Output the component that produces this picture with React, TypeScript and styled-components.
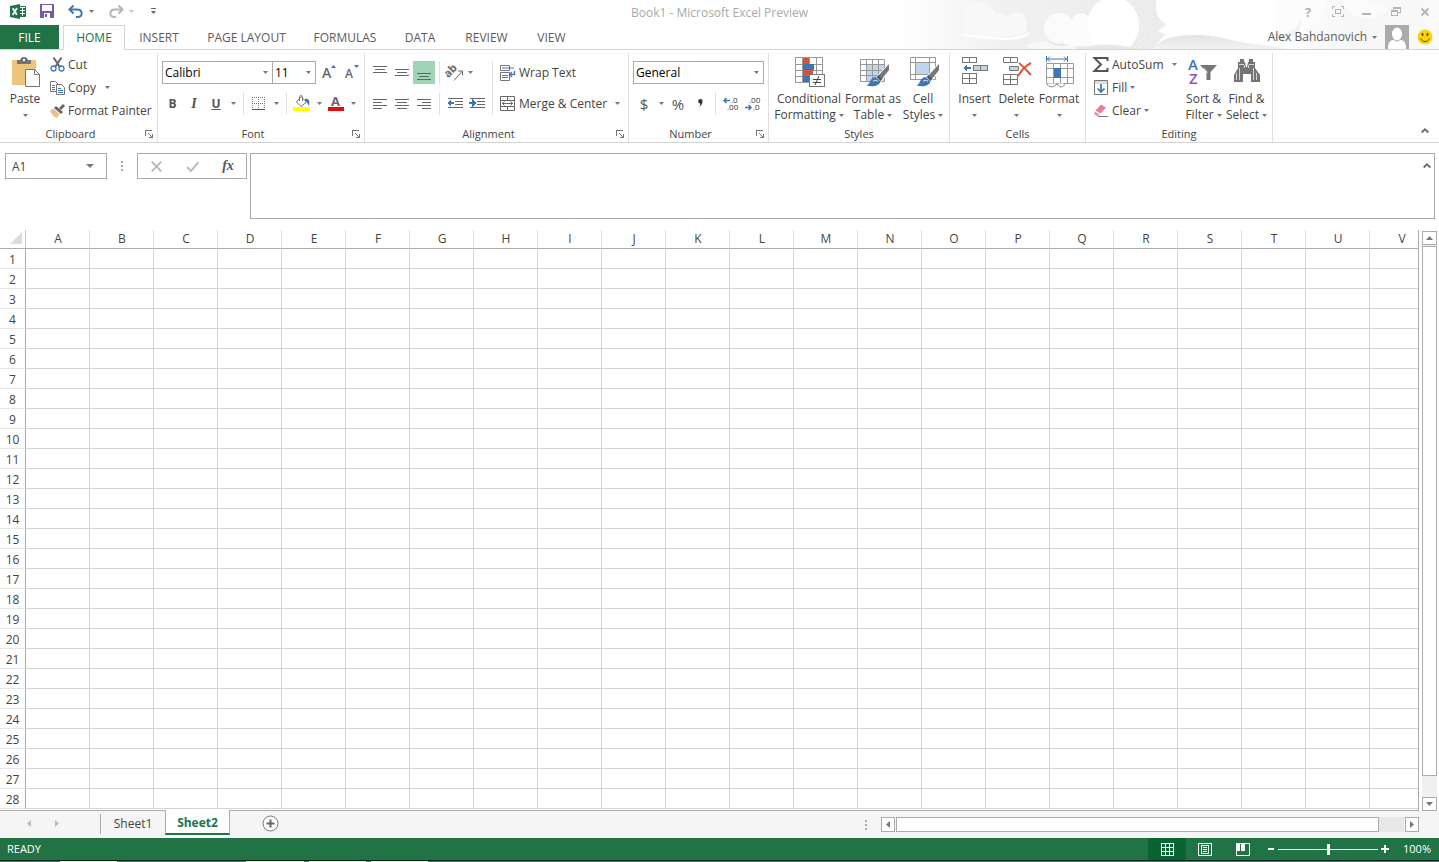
import React from 'react';
import styled, { createGlobalStyle, css } from 'styled-components';

const GREEN = '#217346';
const GREY = '#777777';
const BLUE = '#3e76b5';
const LINE = '#d4d4d4';
const EDGE = '#ababab';

const GlobalStyle = createGlobalStyle`
  *, *::before, *::after { box-sizing: border-box; }
  body { margin: 0; background: #fff; }
  body, button, input, select, textarea {
    font-family: 'Open Sans', 'Noto Sans', sans-serif;
    font-size: 12px;
    line-height: 16px;
    color: #444;
  }
  button {
    padding: 0;
    border: 0;
    background: none;
    white-space: nowrap;
  }
  svg { display: block; flex: none; overflow: visible; }
`;

/* ---------- shared parts ---------- */

const Page = styled.div`
  display: flex;
  flex-direction: column;
  min-height: 100vh;
  overflow: hidden;
`;

const Header = styled.header`
  position: relative;
  border-bottom: 1px solid ${LINE};
`;

const Backdrop = styled.div`
  position: absolute;
  top: 0;
  right: 0;
  height: 49px;
  overflow: hidden;
`;

const TitleBar = styled.div`
  position: relative;
  display: grid;
  grid-template-columns: 1fr auto 1fr;
  align-items: start;
  height: 25px;
`;

const QuickAccess = styled.div`
  display: flex;
  align-items: center;
  height: 22px;
  padding-left: 7px;
`;

const SplitButton = styled.div`
  display: flex;
  margin-right: 10px;
`;

const IconButton = styled.button<{ $w?: number; $on?: boolean }>`
  display: flex;
  align-items: center;
  justify-content: center;
  flex: none;
  width: ${({ $w = 22 }) => $w}px;
  height: 23px;
  color: #555;
  background: ${({ $on }) => ($on ? '#9fd5b7' : 'none')};
`;

const Title = styled.h1`
  margin: 0;
  font-size: 12px;
  font-weight: 400;
  line-height: 25px;
  color: #a9a9a9;
`;

const WindowButtons = styled.div`
  display: flex;
  justify-content: flex-end;
  align-items: center;
  height: 23px;
`;

const TabRow = styled.div`
  position: relative;
  display: flex;
  justify-content: space-between;
  height: 24px;
`;

const Tabs = styled.nav`
  display: flex;
`;

const Tab = styled.button<{ $w: number; $kind?: 'file' | 'active' }>`
  width: ${({ $w }) => $w}px;
  height: 24px;
  padding-top: 1px;
  color: #5c5c5c;
  ${({ $kind }) =>
    $kind === 'file' &&
    css`
      margin-right: 4px;
      background: ${GREEN};
      color: #fff;
    `}
  ${({ $kind }) =>
    $kind === 'active' &&
    css`
      height: 25px;
      padding-top: 0;
      border: 1px solid ${LINE};
      border-bottom: 0;
      background: #fff;
      color: ${GREEN};
    `}
`;

const Account = styled.div`
  display: flex;
  align-items: center;
  gap: 8px;
  padding-right: 6px;
`;

const AccountName = styled.button`
  display: flex;
  align-items: center;
  gap: 5px;
  color: #5c5c5c;
`;

/* ---------- ribbon ---------- */

const Ribbon = styled.div`
  display: flex;
  height: 93px;
  border-bottom: 1px solid ${LINE};
`;

const GroupBox = styled.section<{ $w: number }>`
  display: flex;
  flex-direction: column;
  flex: none;
  width: ${({ $w }) => $w}px;
  height: 89px;
  margin-top: 3px;
  border-right: 1px solid #e1e1e1;
`;

const GroupBody = styled.div<{ $pad?: number }>`
  display: flex;
  height: 73px;
  padding-left: ${({ $pad = 4 }) => $pad}px;
`;

const GroupFooter = styled.div`
  display: flex;
  align-items: center;
  height: 16px;
`;

const GroupName = styled.h2`
  flex: 1;
  margin: 0;
  font-size: 11px;
  font-weight: 400;
  text-align: center;
`;

const TwoRows = styled.div`
  display: flex;
  flex-direction: column;
  padding-top: 4px;
`;

const ToolRow = styled.div`
  display: flex;
  align-items: center;
  height: 31px;
`;

const Divider = styled.span<{ $tall?: boolean }>`
  flex: none;
  width: 1px;
  height: ${({ $tall }) => ($tall ? 54 : 23)}px;
  margin: ${({ $tall }) => ($tall ? '8px 4px 0' : '0 4px')};
  background: #e1e1e1;
`;

const Stack = styled.div<{ $w?: number }>`
  display: flex;
  flex-direction: column;
  width: ${({ $w }) => ($w ? `${$w}px` : 'auto')};
`;

const SmallButton = styled.button<{ $gap?: number }>`
  display: flex;
  align-items: center;
  gap: 3px;
  height: 23px;
  padding: 0 3px;

  & > span { margin-right: ${({ $gap = 0 }) => $gap}px; }
`;

const BigButton = styled.button<{ $w: number }>`
  display: flex;
  flex-direction: column;
  align-items: center;
  flex: none;
  width: ${({ $w }) => $w}px;
  padding-top: 3px;
`;

const BigArt = styled.span`
  height: 35px;
`;

const BigLine = styled.span`
  display: flex;
  align-items: center;
  gap: 3px;
  height: 16px;
`;

const SelectWrap = styled.div<{ $w: number; $joined?: boolean }>`
  position: relative;
  width: ${({ $w }) => $w}px;
  margin-left: ${({ $joined }) => ($joined ? -1 : 0)}px;

  & > svg {
    position: absolute;
    right: 5px;
    top: 10px;
    pointer-events: none;
  }
`;

const Select = styled.select`
  display: block;
  appearance: none;
  width: 100%;
  height: 23px;
  padding: 0 2px;
  border: 1px solid ${EDGE};
  border-radius: 0;
  background: #fff;
  color: #000;
`;

const Letter = styled.span<{ $b?: boolean; $i?: boolean; $u?: boolean; $size?: number }>`
  font-size: ${({ $size = 12 }) => $size}px;
  font-weight: ${({ $b }) => ($b ? 700 : 400)};
  font-style: ${({ $i }) => ($i ? 'italic' : 'normal')};
  font-family: ${({ $i }) => ($i ? "'Liberation Serif', serif" : 'inherit')};
  text-decoration: ${({ $u }) => ($u ? 'underline' : 'none')};
`;

const Collapse = styled.div`
  display: flex;
  flex: 1;
  align-items: flex-end;
  justify-content: flex-end;
  padding: 0 3px;
`;

/* ---------- formula bar ---------- */

const FormulaBar = styled.div`
  display: flex;
  align-items: flex-start;
  padding: 10px 4px 11px 5px;
`;

const NameBox = styled.div`
  display: flex;
  align-items: center;
  width: 102px;
  height: 26px;
  border: 1px solid ${EDGE};
`;

const NameInput = styled.input`
  width: 72px;
  padding: 1px 6px 0;
  border: 0;
  background: none;
`;

const Grip = styled.span<{ $w: number }>`
  display: flex;
  align-items: center;
  justify-content: center;
  width: ${({ $w }) => $w}px;
  height: 26px;
`;

const FormulaTools = styled.div`
  display: flex;
  align-items: center;
  width: 110px;
  height: 26px;
  margin-right: 3px;
  border: 1px solid ${EDGE};
`;

const FormulaField = styled.div`
  display: flex;
  flex: 1;
  height: 66px;
  border: 1px solid ${EDGE};
`;

const FormulaInput = styled.textarea`
  flex: 1;
  border: 0;
  outline: 0;
  resize: none;
`;

/* ---------- grid ---------- */

const Workspace = styled.main`
  display: flex;
  flex: 1;
`;

const GridPane = styled.div`
  flex: 1;
  min-width: 0;
  overflow: hidden;
  border-right: 1px solid ${EDGE};
  border-bottom: 1px solid ${EDGE};
  padding-bottom: 1px;
`;

const Grid = styled.table`
  table-layout: fixed;
  width: 1434px;
  border-collapse: separate;
  border-spacing: 0;
`;

const Corner = styled.td`
  width: 26px;
  height: 19px;
  padding: 0 3px 2px 10px;
  border-right: 1px solid #c6c6c6;
  border-bottom: 1px solid ${EDGE};
`;

const ColHead = styled.th`
  width: 64px;
  height: 19px;
  padding: 0 0 0 1px;
  border-right: 1px solid #e0e0e0;
  border-bottom: 1px solid ${EDGE};
  font-weight: 400;
`;

const RowHead = styled.th`
  height: 20px;
  padding: 2px 0 0;
  border-right: 1px solid ${EDGE};
  border-bottom: 1px solid #e6e6e6;
  font-weight: 400;
`;

const Cell = styled.td`
  height: 20px;
  padding: 0;
  border-right: 1px solid ${LINE};
  border-bottom: 1px solid ${LINE};
`;

const VScroll = styled.div`
  display: flex;
  flex-direction: column;
  width: 20px;
  padding: 1px 2px 0 3px;
  background: #fff;
`;

const ScrollButton = styled.button<{ $side?: boolean }>`
  display: flex;
  align-items: center;
  justify-content: center;
  flex: none;
  width: ${({ $side }) => ($side ? 14 : 15)}px;
  height: ${({ $side }) => ($side ? 15 : 14)}px;
  border: 1px solid ${EDGE};
  background: #fff;
`;

const VTrack = styled.div`
  flex: 1;
  padding: 1px 0 21px;
  background: #f0f0f0;
`;

const Thumb = styled.div`
  height: 100%;
  border: 1px solid ${EDGE};
  background: #fff;
`;

/* ---------- sheet tabs ---------- */

const SheetBar = styled.div`
  display: flex;
  height: 27px;
  background: #f5f5f5;
`;

const SheetNav = styled.div`
  display: flex;
  align-items: center;
  width: 100px;
  height: 25px;
  padding-left: 15px;
`;

const SheetRule = styled.span`
  width: 1px;
  height: 20px;
  margin-top: 3px;
  background: ${EDGE};
`;

const SheetTab = styled.button<{ $active?: boolean }>`
  width: 64px;
  height: 25px;
  margin-top: -1px;
  padding-top: 2px;
  ${({ $active }) =>
    $active &&
    css`
      position: relative;
      width: 65px;
      padding-top: 3px;
      border: 1px solid ${EDGE};
      border-top: 0;
      border-bottom: 2px solid ${GREEN};
      background: #fff;
      color: ${GREEN};
      font-weight: 700;
    `}
`;

const NewSheet = styled.button`
  display: flex;
  align-items: center;
  height: 25px;
  margin-left: 32px;
`;

const HScroll = styled.div`
  display: flex;
  flex: 1;
  justify-content: flex-end;
  align-items: center;
  height: 27px;
  padding-right: 20px;
`;

const HTrack = styled.div`
  flex: 0 1 508px;
  height: 15px;
  margin: 0 1px;
  padding-right: 25px;
  background: #e8e8e8;
`;

/* ---------- status bar ---------- */

const StatusBar = styled.footer`
  display: flex;
  align-items: center;
  justify-content: space-between;
  height: 22px;
  padding: 0 5px 0 7px;
  background: ${GREEN};
  color: #fff;
  font-size: 11px;
`;

const StatusTools = styled.div`
  display: flex;
  align-items: center;
`;

const Views = styled.div`
  display: flex;
  margin-right: 2px;
`;

const ViewButton = styled.button<{ $on?: boolean }>`
  display: flex;
  align-items: center;
  justify-content: center;
  width: 38px;
  height: 22px;
  background: ${({ $on }) => ($on ? '#0a6332' : 'none')};
`;

const ZoomButton = styled.button`
  display: flex;
  align-items: center;
  justify-content: center;
  width: 14px;
  height: 22px;
`;

const ZoomRange = styled.input`
  appearance: none;
  width: 100px;
  height: 11px;
  margin: 0;
  background: linear-gradient(#fff, #fff) center / 100% 1px no-repeat;

  &::-webkit-slider-thumb {
    appearance: none;
    width: 3px;
    height: 11px;
    background: #fff;
  }
`;

const ZoomValue = styled.span`
  width: 34px;
  margin-left: 8px;
  text-align: center;
`;

const BottomEdge = styled.div`
  height: 2px;
  border-top: 1px solid #0c1f16;
  background: linear-gradient(
    90deg,
    #3d7a72 60px,
    #e8ecd8 60px 117px,
    #3d7a72 117px 246px,
    #e8ecd8 246px 304px,
    #3d7a72 304px 309px,
    #e8ecd8 309px 366px,
    #3d7a72 366px 371px,
    #e8ecd8 371px 428px,
    #3d7a72 428px
  );
`;

/* ---------- icons ---------- */

type SvgProps = { w: number; h: number; crisp?: boolean; children: React.ReactNode };

const Svg = ({ w, h, crisp, children }: SvgProps) => (
  <svg
    width={w}
    height={h}
    viewBox={`0 0 ${w} ${h}`}
    fill="none"
    shapeRendering={crisp ? 'crispEdges' : 'auto'}
    aria-hidden="true"
  >
    {children}
  </svg>
);

const Arrow = ({ color = GREY }: { color?: string }) => (
  <Svg w={5} h={3}>
    <path d="M0 0h5L2.500 3z" fill={color} />
  </Svg>
);

const CloudArt = () => (
  <svg width="539" height="49" viewBox="0 0 539 49" aria-hidden="true">
    <defs>
      <linearGradient id="sky" x1="0" x2="1">
        <stop offset="0" stopColor="#fff" />
        <stop offset="0.12" stopColor="#f6f6f6" />
        <stop offset="0.2" stopColor="#f0f0f0" />
        <stop offset="0.5" stopColor="#ededed" />
        <stop offset="0.75" stopColor="#f1f1f1" />
        <stop offset="1" stopColor="#f6f6f6" />
      </linearGradient>
      <linearGradient id="hill" x1="0" y1="0" x2="0" y2="1">
        <stop offset="0" stopColor="#e4e4e4" />
        <stop offset="1" stopColor="#f3f3f3" />
      </linearGradient>
      <linearGradient id="mist" x1="0" x2="1">
        <stop offset="0" stopColor="#fff" />
        <stop offset="0.5" stopColor="#f6f6f6" />
        <stop offset="1" stopColor="#fafafa" />
      </linearGradient>
      <pattern id="grain" width="7" height="7" patternUnits="userSpaceOnUse">
        <path d="M1 1h1v1H1zM4 2h1v1H4zM2 4h1v1H2zM5 5h1v1H5z" fill="#e2e2e2" />
      </pattern>
    </defs>
    <rect width="539" height="49" fill="url(#sky)" />
    <path d="M170 0h50v16h-50zM228 0h50v49h-50z" fill="url(#grain)" />
    <circle cx="79" cy="18" r="16" fill="#f8f8f8" />
    <circle cx="99" cy="22" r="9" fill="#f8f8f8" />
    <circle cx="116" cy="23" r="11" fill="#f8f8f8" />
    <path d="M64 22h62v10c-10 6-30 5-62 2z" fill="#f8f8f8" />
    <path d="M60 35c20-3 46 9 70-3-4 12-40 8-70 3z" fill="#fff" />
    <path d="M126 45c10-3 14-5 22-2 8 3 16 1 24 1l4 5h-46z" fill="#f8f8f8" />
    <circle cx="159" cy="28" r="15" fill="#fbfbfb" />
    <circle cx="181" cy="22" r="9" fill="#fcfcfc" />
    <path d="M164 24h40v22h-40z" fill="#fcfcfc" />
    <ellipse cx="213" cy="25" rx="26" ry="28" fill="#fff" />
    <path d="M148 42c6 3 14 3 22 2-6 3-16 2-22-2z" fill="#dedede" />
    <path d="M176 49c20-6 42-6 60 0z" fill="#e8e8e8" />
    <path d="M256 0h120v49H254c4-6 6-10 12-14l-8-4 8-6-8-8c-2-6-2-12-2-17z" fill="#fff" />
    <path d="M376 0h163v49H376z" fill="url(#mist)" />
    <path d="M376 0h50c0 16-10 28-30 33-6 2-14 2-20 0z" fill="#fcfcfc" />
    <path d="M256 46c10-14 50-13 76-6 18 5 38 5 56 9H256z" fill="url(#hill)" />
    <path d="M364 33c20 4 36-2 36-16 4 10-4 22-18 24z" fill="#f3f3f3" />
    <path d="M442 2c14-6 40-2 46 8-10 10-36 14-46-8z" fill="#fbfbfb" />
  </svg>
);

const ExcelLogo = () => (
  <Svg w={16} h={15}>
    <path d="M9 2.500h6.500v10H9" fill="#fff" stroke={GREEN} />
    <path d="M10 4h2v2h-2zM13 4h2v2h-2zM10 7h2v2h-2zM13 7h2v2h-2zM10 10h2v2h-2zM13 10h2v2h-2z" fill={GREEN} />
    <path d="M0 2l10-2v15L0 13z" fill={GREEN} />
    <path d="M2.700 4.300l4.200 6.400M7 4.100l-4.400 6.800" stroke="#fff" strokeWidth="1.800" />
  </Svg>
);

const SaveIcon = () => (
  <Svg w={14} h={14} crisp>
    <path d="M0 0h14v14H0z" fill="#7b57a4" />
    <path d="M2 1h10v6H2zM4 9h6v5H4z" fill="#fff" />
    <path d="M5 10h2v3H5z" fill="#7b57a4" />
  </Svg>
);

const UndoIcon = ({ color, flip }: { color: string; flip?: boolean }) => (
  <Svg w={15} h={13}>
    <g transform={flip ? 'matrix(-1 0 0 1 15 0)' : undefined} stroke={color} strokeWidth="2">
      <path d="M5.500 0.500L1.500 4.500l4 4" />
      <path d="M2 4.500h7c6 0 6 7 1 7.500H8" />
    </g>
  </Svg>
);

const PasteIcon = () => (
  <Svg w={29} h={32}>
    <path d="M1 4h24v25H1z" fill="#ecc47c" />
    <path d="M6 4h3c1-4 7-4 8 0h3v4H6z" fill="#737373" />
    <path d="M12 3h2v2h-2z" fill="#fff" />
    <path d="M14.500 13.500h9l5 5v12h-14z" fill="#fff" stroke="#777" />
    <path d="M23.500 13.500v5h5" stroke="#777" />
  </Svg>
);

const CutIcon = () => (
  <Svg w={15} h={15}>
    <path d="M3.500 0.500L9.500 9.500M11.500 0.500L5.500 9.500" stroke="#666" strokeWidth="2" />
    <circle cx="3.500" cy="11.500" r="2.500" stroke={BLUE} strokeWidth="1.300" />
    <circle cx="11.500" cy="11.500" r="2.500" stroke={BLUE} strokeWidth="1.300" />
  </Svg>
);

const CopyIcon = () => (
  <Svg w={15} h={14}>
    <path d="M0.500 0.500h5l3 3v7h-8z" fill="#fff" stroke="#777" />
    <path d="M2 4.500h3M2 6.500h3M2 8.500h3" stroke={BLUE} />
    <path d="M6.500 3.500h5l3 3v7h-8z" fill="#fff" stroke="#777" />
    <path d="M8 7.500h3M8 9.500h5M8 11.500h5" stroke={BLUE} />
  </Svg>
);

const PainterIcon = () => (
  <Svg w={15} h={14}>
    <path d="M13 0l2 2-4 4-2-2z" fill="#666" />
    <path d="M6 2l7 6-2 2-7-6z" fill="#666" />
    <path d="M3.500 4.500L9.500 10 7 14C4 13 1 10 0 7z" fill="#ecc08a" />
  </Svg>
);

const GrowIcon = ({ size, down }: { size: number; down?: boolean }) => (
  <Svg w={16} h={17}>
    <text x="2" y="14" fontSize={size} fontWeight="600" fill="#666">A</text>
    <path d={down ? 'M11 1h5l-2.500 3z' : 'M11 4h5l-2.500-3z'} fill={BLUE} />
  </Svg>
);

const BordersIcon = () => (
  <Svg w={14} h={14} crisp>
    <path d="M0 0.500h13M0 6.500h13M0.500 0v13M6.500 0v13M12.500 0v13" stroke="#777" strokeDasharray="1 1" />
    <path d="M0 12.500h13" stroke="#555" />
  </Svg>
);

const FillColorIcon = () => (
  <Svg w={18} h={17}>
    <path d="M0 12h17v4H0z" fill="#ffff00" />
    <path d="M8 1.500L13.500 7 8 11.500 3.500 7z" fill="#fff" stroke="#777" />
    <path d="M6.500 6V2c0-2 3-2 3 0v4" stroke="#777" />
    <path d="M12 4c4-1 5 2 4 7-1-2-2-4-4-5z" fill={BLUE} />
  </Svg>
);

const FontColorIcon = () => (
  <Svg w={16} h={17}>
    <text x="3" y="11" fontSize="13" fontWeight="700" fill="#666">A</text>
    <path d="M0 12h16v4H0z" fill="#e80c0c" />
  </Svg>
);

const LinesIcon = ({ rows, top }: { rows: [number, number][]; top: number }) => (
  <Svg w={14} h={18} crisp>
    {rows.map(([x, w], i) => (
      <path key={i} d={`M${x} ${top + i * 3 + 0.5}h${w}`} stroke="#666" />
    ))}
  </Svg>
);

const three: [number, number][] = [[0, 14], [2, 10], [0, 14]];

const OrientIcon = () => (
  <Svg w={17} h={16}>
    <g transform="rotate(-45 5 9)">
      <text x="0" y="10" fontSize="11" fontWeight="700" fill="#666">ab</text>
    </g>
    <path d="M8 15.500L16 6.500M12 6h4.500v4.500" stroke="#666" />
  </Svg>
);

const IndentIcon = ({ out }: { out?: boolean }) => (
  <Svg w={16} h={12} crisp>
    <path d="M1 0.500h15M8 3.500h8M8 6.500h8M1 9.500h15" stroke="#666" />
    <path
      d={out ? 'M0 5l4-4v3h3v2H4v3z' : 'M7 5L3 1v3H0v2h3v3z'}
      fill={BLUE}
    />
  </Svg>
);

const WrapIcon = () => (
  <Svg w={16} h={16}>
    <path d="M0.500 0.500h9v5h-9zM0.500 7.500h9v8h-9z" stroke="#777" />
    <path d="M2 3h12M2 10.500h6M2 12.500h6" stroke={BLUE} />
    <path d="M14.500 6v3.500H10M12 7l-2.500 2.500L12 12" stroke={BLUE} strokeWidth="1.300" />
  </Svg>
);

const MergeIcon = () => (
  <Svg w={16} h={15}>
    <path d="M0.500 0.500h14v14h-14zM0.500 4.500h14M0.500 10.500h14M7.500 0.500v4M7.500 10.500v4" stroke="#666" />
    <path d="M2 7.500h11M4.500 5.500l-2 2 2 2M10.500 5.500l2 2-2 2" stroke={BLUE} />
  </Svg>
);

const DecimalIcon = ({ more }: { more?: boolean }) => (
  <Svg w={16} h={15}>
    <text x={more ? 8 : 4} y="7" fontSize="8" fill="#333">{more ? '.0' : '.00'}</text>
    <text x={more ? 4 : 8} y="14" fontSize="8" fill="#333">{more ? '.00' : '.0'}</text>
    {more ? (
      <path d="M1 4.500h6M3.500 2L1 4.500 3.500 7" stroke={BLUE} strokeWidth="1.500" />
    ) : (
      <path d="M0 11.500h6M3.500 9L6 11.500 3.500 14" stroke={BLUE} strokeWidth="1.500" />
    )}
  </Svg>
);

const CondIcon = () => (
  <Svg w={29} h={32} crisp>
    <path d="M0.500 1.500h27v25h-27zM0.500 8.500h27M0.500 14.500h27M0.500 20.500h27M7.500 1v25M14.500 1v25M21.500 1v25" stroke="#999" />
    <path d="M8 2h6v6H8zM8 14h10v6H8z" fill="#d35439" />
    <path d="M8 8h11v6H8zM8 20h6v6H8z" fill={BLUE} />
    <path d="M14.500 18.500h15v12h-15z" fill="#fff" stroke="#777" />
    <path d="M18 23h8v1h-8zM18 26h8v1h-8z" fill="#444" />
    <path d="M24 20l-4 9" stroke="#444" shapeRendering="auto" />
  </Svg>
);

const Brush = () => (
  <>
    <path d="M30 7L17 21l5 5 9-11V8z" fill="#fff" />
    <path d="M30 8v6l-7 9-3.500-3.500z" fill="#777" />
    <path d="M19.500 19l4 4-2 2-4-4z" fill="#555" />
    <path d="M16.500 21l5 4.500c-1 4-7 6-14 4 4-1 3-8 9-8.500z" fill={BLUE} />
    <path d="M14 25.500c2-2 4-1 5 0" stroke="#fff" />
  </>
);

const TableIcon = () => (
  <Svg w={29} h={32}>
    <path d="M7 9h18v16H7z" fill="#bfd5e9" />
    <path d="M1.500 3.500h24v22h-24zM1.500 8.500h24M1.500 14.500h24M1.500 19.500h24M7.500 3.500v22M13.500 3.500v22M19.500 3.500v22" stroke="#999" />
    <Brush />
  </Svg>
);

const CellStyleIcon = () => (
  <Svg w={29} h={32}>
    <path d="M1.500 1.500h25v22h-25zM1.500 6.500h25M1.500 18.500h25M6.500 1.500v22M20.500 1.500v22" stroke="#999" />
    <path d="M7 7h13v11H7z" fill="#bfd5e9" />
    <Brush />
  </Svg>
);

const InsertIcon = () => (
  <Svg w={27} h={32} crisp>
    <path d="M1.500 1.500h14v5h-14zM8.500 1.500v5M1.500 17.500h14v10h-14zM1.500 22.500h14M8.500 17.500v10" stroke="#777" />
    <path d="M12.500 9.500h14v5h-14z" fill="#bfd5e9" stroke="#777" />
    <path d="M19.500 9.500v5" stroke="#777" />
    <path d="M2 12l4-3v2h4v2H6v2z" fill={BLUE} />
  </Svg>
);

const DeleteIcon = () => (
  <Svg w={30} h={32}>
    <path d="M1.500 1.500h14v5h-14zM8.500 1.500v5M1.500 18.500h14v10h-14zM1.500 23.500h14M8.500 18.500v10" stroke="#777" />
    <path d="M7.500 10.500h9v4h-9z" fill="#bfd5e9" stroke="#777" />
    <path d="M17 7c4 3 8 8 12 12M29 7c-6 3-10 8-13 13" stroke="#dc5a3c" strokeWidth="2" />
  </Svg>
);

const FormatIcon = () => (
  <Svg w={29} h={32}>
    <path d="M1.500 0v6M22.500 0v6M2 3h20M5 0.500L2.500 3 5 5.500M19 0.500L21.500 3 19 5.500" stroke={BLUE} />
    <path d="M1.500 7.500h27v20h-27zM1.500 12.500h27M1.500 21.500h27M8.500 7.500v20M15.500 7.500v20M22.500 7.500v20" stroke="#999" />
    <path d="M9 12h7v10H9z" fill={BLUE} />
    <path d="M2 27.500c1 5 8 4 10 0 2 5 7 4 8 0" fill="#fff" stroke="#888" />
  </Svg>
);

const SumIcon = () => (
  <Svg w={16} h={15}>
    <path d="M14.500 4V1H1.500L8 7.500 1.500 14h13v-3" stroke="#555" strokeWidth="2" />
  </Svg>
);

const FillIcon = () => (
  <Svg w={16} h={15}>
    <path d="M1.500 0.500h13v14H1.500z" fill="#fff" stroke="#777" />
    <path d="M2 1h12v3H2z" fill="#ddd" />
    <path d="M8 4v8M4.500 8.500L8 12l3.500-3.500" stroke={BLUE} strokeWidth="1.700" />
  </Svg>
);

const ClearIcon = () => (
  <Svg w={16} h={14}>
    <path d="M8 0.500L13 3.500 7.500 9.500 2.500 6.500z" fill="#ec7f97" />
    <path d="M2 7.500L6.500 10.500l-2 2L1 10z" fill="#e895a6" />
    <path d="M5 12.500h10" stroke="#777" />
  </Svg>
);

const SortIcon = () => (
  <Svg w={29} h={32}>
    <text x="-1" y="14" fontSize="15" fontWeight="600" fill={BLUE}>A</text>
    <text x="0" y="28" fontSize="15" fontWeight="600" fill="#8a5bb0">Z</text>
    <path d="M11 9h17l-6.500 7v8h-4v-8z" fill="#777" />
    <path d="M18.500 16.500l-4-4.500" stroke="#fff" />
  </Svg>
);

const FindIcon = () => (
  <Svg w={27} h={32}>
    <path d="M7 3h4v3h1l1 5h1l1-5h1V3h4v3h2v6l5 7v7h-9v-8h-8v8H1v-7l4-7V6h2z" fill="#747474" />
    <path d="M6 8.500h5M16 8.500h5M3.500 17v7M6.500 12v12M20.500 12v12M23.500 17v7M11.500 9v3M15.500 9v3" stroke="#fff" strokeWidth="0.700" />
  </Svg>
);

const LauncherIcon = () => (
  <Svg w={8} h={8} crisp>
    <path d="M0.500 6V0.500H7M4 7.500h4M7.500 4v4M3 3l4 4" stroke="#777" />
  </Svg>
);

const Chevron = () => (
  <Svg w={8} h={5}>
    <path d="M0.700 4.500L4 1.200l3.300 3.300" stroke="#666" strokeWidth="1.800" />
  </Svg>
);

const Dots = () => (
  <Svg w={2} h={10} crisp>
    <path d="M0 0h2v2H0zM0 4h2v2H0zM0 8h2v2H0z" fill="#aaa" />
  </Svg>
);

const CloseIcon = ({ size = 8 }: { size?: number }) => (
  <svg width={size} height={size} viewBox="0 0 8 8" aria-hidden="true">
    <path d="M0.500 0.500l7 7M7.500 0.500l-7 7" stroke="#b4b4b4" strokeWidth={size > 9 ? 1.2 : 1.8} />
  </svg>
);

/* ---------- composed pieces ---------- */

type GroupProps = {
  name: string;
  w: number;
  pad?: number;
  launcher?: boolean;
  children: React.ReactNode;
};

const Group = ({ name, w, pad, launcher, children }: GroupProps) => (
  <GroupBox $w={w} aria-label={name}>
    <GroupBody $pad={pad}>{children}</GroupBody>
    <GroupFooter>
      <GroupName>{name}</GroupName>
      {launcher && (
        <IconButton $w={16} aria-label={`${name} settings`}>
          <LauncherIcon />
        </IconButton>
      )}
    </GroupFooter>
  </GroupBox>
);

type DropProps = { label: string; value: string; w: number; joined?: boolean };

const Drop = ({ label, value, w, joined }: DropProps) => (
  <SelectWrap $w={w} $joined={joined}>
    <Select aria-label={label} defaultValue={value}>
      <option>{value}</option>
    </Select>
    <Arrow />
  </SelectWrap>
);

const MoreButton = ({ label, color }: { label: string; color?: string }) => (
  <IconButton $w={12} aria-label={label}>
    <Arrow color={color} />
  </IconButton>
);

type BigProps = { icon: React.ReactNode; first: string; second?: string; w: number };

const Big = ({ icon, first, second, w }: BigProps) => (
  <BigButton $w={w}>
    <BigArt>{icon}</BigArt>
    <BigLine>{first}</BigLine>
    <BigLine>
      {second}
      <Arrow />
    </BigLine>
  </BigButton>
);

const tabs = [
  { name: 'INSERT', w: 68 },
  { name: 'PAGE LAYOUT', w: 107 },
  { name: 'FORMULAS', w: 90 },
  { name: 'DATA', w: 60 },
  { name: 'REVIEW', w: 73 },
  { name: 'VIEW', w: 57 },
];

const columns = 'ABCDEFGHIJKLMNOPQRSTUV'.split('');
const rows = Array.from({ length: 28 }, (_, i) => i + 1);

const TopHeader = () => (
  <Header>
    <Backdrop>
      <CloudArt />
    </Backdrop>
    <TitleBar>
      <QuickAccess>
        <IconButton aria-label="Excel"><ExcelLogo /></IconButton>
        <IconButton $w={36} aria-label="Save"><SaveIcon /></IconButton>
        <SplitButton>
          <IconButton $w={20} aria-label="Undo"><UndoIcon color={BLUE} /></IconButton>
          <MoreButton label="Undo history" />
        </SplitButton>
        <SplitButton>
          <IconButton $w={18} aria-label="Redo"><UndoIcon color="#b5b5b5" flip /></IconButton>
          <MoreButton label="Redo history" color="#c4c4c4" />
        </SplitButton>
        <IconButton $w={12} aria-label="Customize toolbar">
          <Svg w={5} h={6}>
            <path d="M0 0h5v1H0zM0 3h5L2.500 6z" fill="#666" />
          </Svg>
        </IconButton>
      </QuickAccess>
      <Title>Book1 - Microsoft Excel Preview</Title>
      <WindowButtons>
        <IconButton $w={30} aria-label="Help">
          <Letter $b $size={13} style={{ color: '#b0b0b0' }}>?</Letter>
        </IconButton>
        <IconButton $w={29} aria-label="Ribbon display">
          <Svg w={12} h={11} crisp>
            <path d="M0.500 3V0.500H3M9 0.500h2.500V3M11.500 8v2.500H9M3 10.500H0.500V8M3.500 3.500h5v4h-5z" stroke="#b4b4b4" />
          </Svg>
        </IconButton>
        <IconButton $w={29} aria-label="Minimize">
          <Svg w={9} h={6} crisp><path d="M0 4h9v2H0z" fill="#b4b4b4" /></Svg>
        </IconButton>
        <IconButton $w={29} aria-label="Restore">
          <Svg w={10} h={10} crisp>
            <path d="M2.500 3V0.500h7v5H7M0.500 3.500h6v5h-6zM2 1.500h8M0 4.500h7" stroke="#b4b4b4" />
          </Svg>
        </IconButton>
        <IconButton $w={29} aria-label="Close"><CloseIcon /></IconButton>
      </WindowButtons>
    </TitleBar>
    <TabRow>
      <Tabs>
        <Tab $w={59} $kind="file">FILE</Tab>
        <Tab $w={62} $kind="active">HOME</Tab>
        {tabs.map((t) => (
          <Tab key={t.name} $w={t.w}>{t.name}</Tab>
        ))}
      </Tabs>
      <Account>
        <AccountName>
          Alex Bahdanovich
          <Arrow />
        </AccountName>
        <Svg w={24} h={24}>
          <path d="M0 0h24v24H0z" fill="#ababab" />
          <ellipse cx="12" cy="9" rx="5" ry="6.500" fill="#fff" />
          <path d="M3 24c0-7 2-9 6-9 2 2 4 2 6 0 4 0 6 2 6 9z" fill="#fff" />
        </Svg>
        <Svg w={16} h={16}>
          <circle cx="8" cy="8" r="7.500" fill="#f8d408" />
          <ellipse cx="5.500" cy="5.500" rx="1" ry="1.700" fill="#5a4a00" />
          <ellipse cx="10.500" cy="5.500" rx="1" ry="1.700" fill="#5a4a00" />
          <path d="M3.500 9.500c2 4 7 4 9 0" stroke="#5a4a00" />
        </Svg>
      </Account>
    </TabRow>
  </Header>
);

const RibbonBar = () => (
  <Ribbon>
    <Group name="Clipboard" w={158} pad={3} launcher>
      <Big w={44} icon={<PasteIcon />} first="Paste" />
      <Stack>
        <SmallButton><CutIcon /><span>Cut</span></SmallButton>
        <SmallButton $gap={6}><CopyIcon /><span>Copy</span><Arrow /></SmallButton>
        <SmallButton><PainterIcon /><span>Format Painter</span></SmallButton>
      </Stack>
    </Group>

    <Group name="Font" w={207} launcher>
      <TwoRows>
        <ToolRow>
          <Drop label="Font" value="Calibri" w={111} />
          <Drop label="Font size" value="11" w={44} joined />
          <IconButton $w={24} aria-label="Increase font size"><GrowIcon size={14} /></IconButton>
          <IconButton aria-label="Decrease font size"><GrowIcon size={12} down /></IconButton>
        </ToolRow>
        <ToolRow>
          <IconButton $w={21}><Letter $b>B</Letter></IconButton>
          <IconButton><Letter $b $i $size={14}>I</Letter></IconButton>
          <IconButton><Letter $b $u>U</Letter></IconButton>
          <MoreButton label="Underline styles" />
          <Divider />
          <IconButton aria-label="Borders"><BordersIcon /></IconButton>
          <MoreButton label="Border styles" />
          <Divider />
          <IconButton aria-label="Fill colour"><FillColorIcon /></IconButton>
          <MoreButton label="Fill colours" />
          <IconButton aria-label="Font colour"><FontColorIcon /></IconButton>
          <MoreButton label="Font colours" />
        </ToolRow>
      </TwoRows>
    </Group>

    <Group name="Alignment" w={264} launcher>
      <TwoRows>
        <ToolRow>
          <IconButton aria-label="Top align"><LinesIcon rows={three} top={2} /></IconButton>
          <IconButton aria-label="Middle align"><LinesIcon rows={three} top={5} /></IconButton>
          <IconButton $on aria-label="Bottom align"><LinesIcon rows={three} top={9} /></IconButton>
          <Divider />
          <IconButton $w={20} aria-label="Orientation"><OrientIcon /></IconButton>
          <MoreButton label="Orientation options" />
        </ToolRow>
        <ToolRow>
          <IconButton aria-label="Align left">
            <LinesIcon top={4} rows={[[0, 14], [0, 9], [0, 14], [0, 9]]} />
          </IconButton>
          <IconButton aria-label="Centre">
            <LinesIcon top={4} rows={[[0, 14], [2, 10], [0, 14], [2, 10]]} />
          </IconButton>
          <IconButton aria-label="Align right">
            <LinesIcon top={4} rows={[[0, 14], [5, 9], [0, 14], [5, 9]]} />
          </IconButton>
          <Divider />
          <IconButton aria-label="Decrease indent"><IndentIcon out /></IconButton>
          <IconButton aria-label="Increase indent"><IndentIcon /></IconButton>
        </ToolRow>
      </TwoRows>
      <Divider $tall />
      <TwoRows>
        <ToolRow>
          <SmallButton><WrapIcon /><span>Wrap Text</span></SmallButton>
        </ToolRow>
        <ToolRow>
          <SmallButton $gap={5}><MergeIcon /><span>Merge &amp; Center</span><Arrow /></SmallButton>
        </ToolRow>
      </TwoRows>
    </Group>

    <Group name="Number" w={140} launcher>
      <TwoRows>
        <ToolRow>
          <Drop label="Number format" value="General" w={131} />
        </ToolRow>
        <ToolRow>
          <IconButton><Letter $size={15}>$</Letter></IconButton>
          <MoreButton label="Currencies" />
          <IconButton><Letter $size={15}>%</Letter></IconButton>
          <IconButton aria-label="Comma style">
            <Svg w={5} h={9}>
              <path d="M2.500 0a2 2 0 0 1 2 2.200C4.500 5 3 7 1 8c1-1 1.500-2.500 1.300-3.500A2 2 0 0 1 2.500 0z" fill="#333" />
            </Svg>
          </IconButton>
          <Divider />
          <IconButton aria-label="Increase decimal"><DecimalIcon more /></IconButton>
          <IconButton aria-label="Decrease decimal"><DecimalIcon /></IconButton>
        </ToolRow>
      </TwoRows>
    </Group>

    <Group name="Styles" w={181} pad={5}>
      <Big w={70} icon={<CondIcon />} first="Conditional" second="Formatting" />
      <Big w={58} icon={<TableIcon />} first="Format as" second="Table" />
      <Big w={42} icon={<CellStyleIcon />} first="Cell" second="Styles" />
    </Group>

    <Group name="Cells" w={136}>
      <Big w={41} icon={<InsertIcon />} first="Insert" />
      <Big w={43} icon={<DeleteIcon />} first="Delete" />
      <Big w={42} icon={<FormatIcon />} first="Format" />
    </Group>

    <Group name="Editing" w={187}>
      <Stack $w={92}>
        <SmallButton $gap={5}><SumIcon /><span>AutoSum</span><Arrow /></SmallButton>
        <SmallButton><FillIcon /><span>Fill</span><Arrow /></SmallButton>
        <SmallButton><ClearIcon /><span>Clear</span><Arrow /></SmallButton>
      </Stack>
      <Big w={43} icon={<SortIcon />} first="Sort &" second="Filter" />
      <Big w={43} icon={<FindIcon />} first="Find &" second="Select" />
    </Group>

    <Collapse>
      <IconButton aria-label="Collapse the ribbon"><Chevron /></IconButton>
    </Collapse>
  </Ribbon>
);

const FormulaRow = () => (
  <FormulaBar>
    <NameBox>
      <NameInput aria-label="Name box" defaultValue="A1" />
      <IconButton $w={24} aria-label="Named ranges">
        <Svg w={8} h={4}><path d="M0 0h8L4 4z" fill="#777" /></Svg>
      </IconButton>
    </NameBox>
    <Grip $w={30}><Dots /></Grip>
    <FormulaTools>
      <IconButton $w={36} aria-label="Cancel"><CloseIcon size={11} /></IconButton>
      <IconButton $w={36} aria-label="Enter">
        <Svg w={13} h={11}><path d="M1 6l4 4 7.500-9" stroke="#bdbdbd" strokeWidth="2" /></Svg>
      </IconButton>
      <IconButton $w={36} aria-label="Insert function"><Letter $b $i $size={14}>fx</Letter></IconButton>
    </FormulaTools>
    <FormulaField>
      <FormulaInput aria-label="Formula bar" />
      <IconButton $w={15} aria-label="Collapse formula bar"><Chevron /></IconButton>
    </FormulaField>
  </FormulaBar>
);

const SheetGrid = () => (
  <Workspace>
    <GridPane>
      <Grid>
        <thead>
          <tr>
            <Corner>
              <Svg w={12} h={12}><path d="M12 0v12H0z" fill="#dcdcdc" /></Svg>
            </Corner>
            {columns.map((c) => (
              <ColHead key={c} scope="col">{c}</ColHead>
            ))}
          </tr>
        </thead>
        <tbody>
          {rows.map((r) => (
            <tr key={r}>
              <RowHead scope="row">{r}</RowHead>
              {columns.map((c) => (
                <Cell key={c} />
              ))}
            </tr>
          ))}
        </tbody>
      </Grid>
    </GridPane>
    <VScroll>
      <ScrollButton aria-label="Scroll up">
        <Svg w={7} h={4}><path d="M0 4h7L3.500 0z" fill="#777" /></Svg>
      </ScrollButton>
      <VTrack><Thumb /></VTrack>
      <ScrollButton aria-label="Scroll down">
        <Svg w={7} h={4}><path d="M0 0h7L3.500 4z" fill="#777" /></Svg>
      </ScrollButton>
    </VScroll>
  </Workspace>
);

const SheetTabs = () => (
  <SheetBar>
    <SheetNav>
      <IconButton $w={28} aria-label="Previous sheet">
        <Svg w={4} h={7}><path d="M4 0v7L0 3.500z" fill="#bbb" /></Svg>
      </IconButton>
      <IconButton $w={28} aria-label="Next sheet">
        <Svg w={4} h={7}><path d="M0 0v7l4-3.500z" fill="#bbb" /></Svg>
      </IconButton>
    </SheetNav>
    <SheetRule />
    <SheetTab>Sheet1</SheetTab>
    <SheetTab $active>Sheet2</SheetTab>
    <NewSheet aria-label="New sheet">
      <Svg w={17} h={17}>
        <circle cx="8.500" cy="8.500" r="7.500" fill="#fff" stroke="#777" />
        <path d="M8.500 4.500v8M4.500 8.500h8" stroke="#666" strokeWidth="2" />
      </Svg>
    </NewSheet>
    <HScroll>
      <Grip $w={30}><Dots /></Grip>
      <ScrollButton $side aria-label="Scroll left">
        <Svg w={4} h={7}><path d="M4 0v7L0 3.500z" fill="#777" /></Svg>
      </ScrollButton>
      <HTrack><Thumb /></HTrack>
      <ScrollButton $side aria-label="Scroll right">
        <Svg w={4} h={7}><path d="M0 0v7l4-3.500z" fill="#777" /></Svg>
      </ScrollButton>
    </HScroll>
  </SheetBar>
);

const Status = () => (
  <>
    <StatusBar>
      <span>READY</span>
      <StatusTools>
        <Views>
          <ViewButton $on aria-label="Normal view">
            <Svg w={13} h={13} crisp>
              <path d="M0.500 0.500h12v12h-12zM0.500 4.500h12M0.500 8.500h12M4.500 0.500v12M8.500 0.500v12" stroke="#fff" />
            </Svg>
          </ViewButton>
          <ViewButton aria-label="Page layout view">
            <Svg w={14} h={13} crisp>
              <path d="M0.500 0.500h13v12h-13zM3.500 2.500h7v8h-7zM5 4.500h4M5 6.500h4M5 8.500h4" stroke="#fff" />
            </Svg>
          </ViewButton>
          <ViewButton aria-label="Page break view">
            <Svg w={14} h={13} crisp>
              <path d="M0.500 0.500h13v12h-13z" stroke="#fff" />
              <path d="M0 0h4v8H0zM5 0h4v8H5z" fill="#fff" />
            </Svg>
          </ViewButton>
        </Views>
        <ZoomButton aria-label="Zoom out">
          <Svg w={6} h={2} crisp><path d="M0 0h6v2H0z" fill="#fff" /></Svg>
        </ZoomButton>
        <ZoomRange type="range" aria-label="Zoom" min={0} max={200} defaultValue={100} />
        <ZoomButton aria-label="Zoom in">
          <Svg w={8} h={8} crisp><path d="M0 3h8v2H0zM3 0h2v8H3z" fill="#fff" /></Svg>
        </ZoomButton>
        <ZoomValue>100%</ZoomValue>
      </StatusTools>
    </StatusBar>
    <BottomEdge />
  </>
);

export default function App() {
  return (
    <Page>
      <GlobalStyle />
      <TopHeader />
      <RibbonBar />
      <FormulaRow />
      <SheetGrid />
      <SheetTabs />
      <Status />
    </Page>
  );
}
